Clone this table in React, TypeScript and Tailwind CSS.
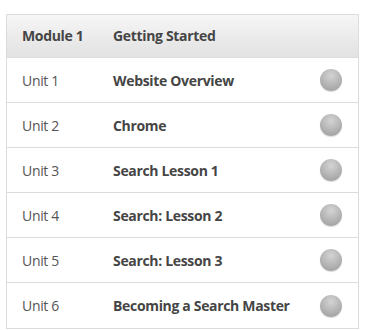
import React from 'react';

const units = [
  { unit: 'Unit 1', title: 'Website Overview' },
  { unit: 'Unit 2', title: 'Chrome' },
  { unit: 'Unit 3', title: 'Search Lesson 1' },
  { unit: 'Unit 4', title: 'Search: Lesson 2' },
  { unit: 'Unit 5', title: 'Search: Lesson 3' },
  { unit: 'Unit 6', title: 'Becoming a Search Master' },
];

const Dot: React.FC = () => (
  <span className="block w-[22px] h-[22px] rounded-full bg-[radial-gradient(circle_at_50%_30%,#d4d4d4_0%,#b3b3b3_55%,#999_100%)] shadow-[0_1px_1px_rgba(0,0,0,0.15)]" />
);

const App: React.FC = () => {
  return (
    <div className="w-[368px] h-[330px] bg-white pt-[14px] pl-[6px] font-['Open_Sans',sans-serif] tracking-[-0.33px]">
      <div className="w-[353px] border border-[#dcdcdc]">
        <div className="flex items-center h-[43px] pb-px border-b border-[#dcdcdc] bg-gradient-to-b from-[#f6f6f6] to-[#e2e2e2] text-[14px] font-bold text-[#454545]">
          <div className="w-[106px] pl-[15px]">Module 1</div>
          <div className="flex-1">Getting Started</div>
        </div>
        {units.map((u, i) => (
          <div
            key={u.unit}
            className={`flex items-center h-[45px] text-[14px] ${i < units.length - 1 ? 'border-b border-[#dcdcdc]' : ''}`}
          >
            <div className="w-[106px] pl-[15px] text-[#555]">{u.unit}</div>
            <div className="flex-1 font-bold text-[#454545]">{u.title}</div>
            <div className="pr-[16px]">
              <Dot />
            </div>
          </div>
        ))}
      </div>
    </div>
  );
};

export default App;
